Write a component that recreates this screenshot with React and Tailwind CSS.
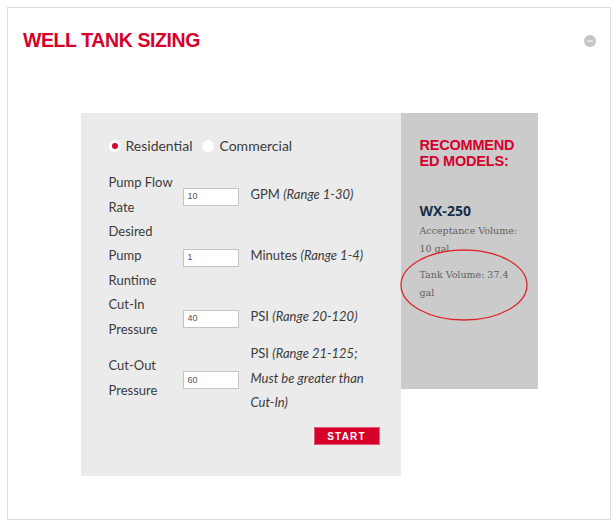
import { useState } from "react";

const FIELDS = [
  { label: ["Pump Flow", "Rate"], value: "10", unit: "GPM", range: ["(Range 1-30)"] },
  { label: ["Desired", "Pump", "Runtime"], value: "1", unit: "Minutes", range: ["(Range 1-4)"] },
  { label: ["Cut-In", "Pressure"], value: "40", unit: "PSI", range: ["(Range 20-120)"] },
  {
    label: ["Cut-Out", "Pressure"],
    value: "60",
    unit: "PSI",
    range: ["(Range 21-125;", "Must be greater than", "Cut-In)"],
  },
];

function Radio({ checked, label, onClick }) {
  return (
    <button type="button" onClick={onClick} className="flex items-center gap-[5px]">
      <span className="flex h-[12px] w-[12px] items-center justify-center rounded-full bg-white">
        {checked && <span className="h-[6px] w-[6px] rounded-full bg-[#d5002b]" />}
      </span>
      <span>{label}</span>
    </button>
  );
}

export default function App() {
  const [type, setType] = useState("residential");
  const [values, setValues] = useState(FIELDS.map((f) => f.value));

  return (
    <div className="h-[528px] w-[616px] bg-white p-[7px] font-['Lato','Liberation_Sans',sans-serif] text-[#3b3b3b]">
      <div className="relative h-[513px] w-[604px] border border-[#dcdcdc]">
        {/* header */}
        <div className="flex items-center justify-between pl-[15px] pr-[14px] pt-[18px]">
          <h1 className="font-['Liberation_Sans',sans-serif] text-[19.5px] font-bold tracking-[-0.4px] text-[#d5002b]">
            WELL TANK SIZING
          </h1>
          <span className="flex h-[12px] w-[12px] items-center justify-center rounded-full bg-[#c6c6c6]">
            <span className="h-[2px] w-[6px] rounded bg-[#e4e4e4]" />
          </span>
        </div>

        {/* body */}
        <div className="mt-[58px] flex items-start justify-center">
          {/* calculator */}
          <div className="h-[363px] w-[320px] bg-[#ebebeb] pl-[28px] pr-[21px] pt-[23px]">
            <div className="flex items-center gap-[10px] text-[14px] leading-[20px]">
              <Radio checked={type === "residential"} label="Residential" onClick={() => setType("residential")} />
              <Radio checked={type === "commercial"} label="Commercial" onClick={() => setType("commercial")} />
            </div>

            <div className="mt-[14px] grid grid-cols-[74px_68px_1fr] items-center text-[13px] leading-[24.4px]">
              {FIELDS.map((f, i) => (
                <div key={f.unit + i} className="contents">
                  <div>
                    {f.label.map((l) => (
                      <div key={l}>{l}</div>
                    ))}
                  </div>
                  <div>
                    <input
                      value={values[i]}
                      onChange={(e) => setValues((xs) => xs.map((x, j) => (j === i ? e.target.value : x)))}
                      className="h-[18px] w-[56px] border border-[#c4c4c4] bg-white px-[4px] font-['Liberation_Sans',sans-serif] text-[9px] text-[#555] outline-none"
                    />
                  </div>
                  <div>
                    {f.range.map((r, j) => (
                      <div key={r}>
                        {j === 0 && <span>{f.unit} </span>}
                        <span className="italic">{r}</span>
                      </div>
                    ))}
                  </div>
                </div>
              ))}
            </div>

            <div className="mt-[13px] flex justify-end">
              <button
                type="button"
                className="h-[18px] w-[66px] border border-[#e8587a] bg-[#d5002b] font-['Liberation_Sans',sans-serif] text-[10px] font-bold tracking-[1.2px] text-white"
              >
                START
              </button>
            </div>
          </div>

          {/* results */}
          <div className="relative h-[276px] w-[137px] bg-[#cbcbcb] pl-[19px] pt-[25px]">
            <h2 className="font-['Liberation_Sans',sans-serif] text-[14.5px] font-bold leading-[15.5px] tracking-[-0.2px] text-[#d5002b]">
              RECOMMEND
              <br />
              ED MODELS:
            </h2>
            <h3 className="mt-[33px] font-['Open_Sans',sans-serif] text-[14px] font-bold leading-[18px] text-[#163049]">
              WX-250
            </h3>
            <div className="mt-[2px] font-['DejaVu_Serif',serif] text-[9.5px] leading-[18px] text-[#5f5f5f]">
              <p>
                Acceptance Volume:
                <br />
                10 gal
              </p>
              <p className="mt-[8px]">
                Tank Volume: 37.4
                <br />
                gal
              </p>
            </div>
          </div>
        </div>

        {/* hand-drawn highlight */}
        <svg className="pointer-events-none absolute left-[390px] top-[240px]" width="136" height="76" viewBox="0 0 136 76">
          <ellipse cx="66" cy="37" rx="63" ry="35" fill="none" stroke="#e0242b" strokeWidth="1.3" />
        </svg>
      </div>
    </div>
  );
}
